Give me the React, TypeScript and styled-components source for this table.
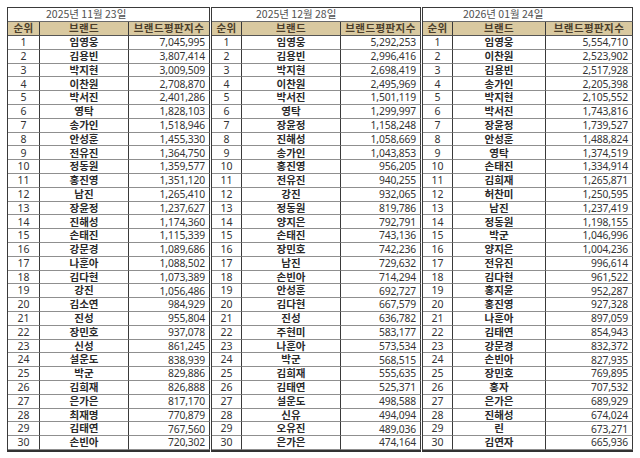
import { Fragment } from 'react';
import styled, { createGlobalStyle } from 'styled-components';

type Entry = [string, string];

type Board = {
  date: string;
  cols: string;
  width: number;
  indent: number;
  rows: Entry[];
};

const boards: Board[] = [
  {
    date: '2025년 11월 23일',
    cols: '32px 89px 1fr',
    width: 203,
    indent: 38,
    rows: [
      ['임영웅', '7,045,995'],
      ['김용빈', '3,807,414'],
      ['박지현', '3,009,509'],
      ['이찬원', '2,708,870'],
      ['박서진', '2,401,286'],
      ['영탁', '1,828,103'],
      ['송가인', '1,518,946'],
      ['안성훈', '1,455,330'],
      ['전유진', '1,364,750'],
      ['정동원', '1,359,577'],
      ['홍진영', '1,351,120'],
      ['남진', '1,265,410'],
      ['장윤정', '1,237,627'],
      ['진해성', '1,174,360'],
      ['손태진', '1,115,339'],
      ['강문경', '1,089,686'],
      ['나훈아', '1,088,502'],
      ['김다현', '1,073,389'],
      ['강진', '1,056,486'],
      ['김소연', '984,929'],
      ['진성', '955,804'],
      ['장민호', '937,078'],
      ['신성', '861,245'],
      ['설운도', '838,939'],
      ['박군', '829,886'],
      ['김희재', '826,888'],
      ['은가은', '817,170'],
      ['최재명', '770,879'],
      ['김태연', '767,560'],
      ['손빈아', '720,302'],
    ],
  },
  {
    date: '2025년 12월 28일',
    cols: '30px 99px 1fr',
    width: 210,
    indent: 44,
    rows: [
      ['임영웅', '5,292,253'],
      ['김용빈', '2,996,416'],
      ['박지현', '2,698,419'],
      ['이찬원', '2,495,969'],
      ['박서진', '1,501,119'],
      ['영탁', '1,299,997'],
      ['장윤정', '1,158,248'],
      ['진해성', '1,058,669'],
      ['송가인', '1,043,853'],
      ['홍진영', '956,205'],
      ['전유진', '940,255'],
      ['강진', '932,065'],
      ['정동원', '819,786'],
      ['양지은', '792,791'],
      ['손태진', '743,136'],
      ['장민호', '742,236'],
      ['남진', '729,632'],
      ['손빈아', '714,294'],
      ['안성훈', '692,727'],
      ['김다현', '667,579'],
      ['진성', '636,782'],
      ['주현미', '583,177'],
      ['나훈아', '573,534'],
      ['박군', '568,515'],
      ['김희재', '555,635'],
      ['김태연', '525,371'],
      ['설운도', '498,588'],
      ['신유', '494,094'],
      ['오유진', '489,036'],
      ['은가은', '474,164'],
    ],
  },
  {
    date: '2026년 01월 24일',
    cols: '30px 93px 1fr',
    width: 211,
    indent: 40,
    rows: [
      ['임영웅', '5,554,710'],
      ['이찬원', '2,523,902'],
      ['김용빈', '2,517,928'],
      ['송가인', '2,205,398'],
      ['박지현', '2,105,552'],
      ['박서진', '1,743,816'],
      ['장윤정', '1,739,527'],
      ['안성훈', '1,488,824'],
      ['영탁', '1,374,519'],
      ['손태진', '1,334,914'],
      ['김희재', '1,265,871'],
      ['허찬미', '1,250,595'],
      ['남진', '1,237,419'],
      ['정동원', '1,198,155'],
      ['박군', '1,046,996'],
      ['양지은', '1,004,236'],
      ['전유진', '996,614'],
      ['김다현', '961,522'],
      ['홍지윤', '952,287'],
      ['홍진영', '927,328'],
      ['나훈아', '897,059'],
      ['김태연', '854,943'],
      ['강문경', '832,372'],
      ['손빈아', '827,935'],
      ['장민호', '769,895'],
      ['홍자', '707,532'],
      ['은가은', '689,929'],
      ['진해성', '674,024'],
      ['린', '673,271'],
      ['김연자', '665,936'],
    ],
  },
];

const GlobalStyle = createGlobalStyle`
  html, body {
    margin: 0;
    background: #ffffff;
  }
  body {
    font-family: "Noto Sans CJK KR", "Noto Sans", sans-serif;
    color: #222;
  }
`;

// ANCHOR Page
const Page = styled.div`
  display: flex;
  align-items: flex-start;
  gap: 1px;
  padding: 7px 0 0 7px;
  width: 640px;
  height: 458px;
  box-sizing: border-box;
  background: #fff;
`;

// ANCHOR Table
const Sheet = styled.div<{ $cols: string; $width: number }>`
  display: grid;
  grid-template-columns: ${(p) => p.$cols};
  grid-template-rows: 14px 14px repeat(30, 13.8px);
  width: ${(p) => p.$width}px;
  box-sizing: border-box;
  border-top: 1px solid #3a3a3a;
  border-left: 1px solid #3a3a3a;
  border-bottom: 2px solid #333;
`;

const Title = styled.div<{ $indent: number }>`
  grid-column: 1 / -1;
  box-sizing: border-box;
  display: flex;
  align-items: center;
  border-right: 1px solid #3a3a3a;
  border-bottom: 1px solid #6a6a6a;
  padding-left: ${(p) => p.$indent}px;
  font-size: 10.5px;
  line-height: 1;
  color: #505050;
  white-space: nowrap;
`;

const Cell = styled.div<{ $align?: 'center' | 'right' }>`
  box-sizing: border-box;
  border-right: 1px solid #3a3a3a;
  border-bottom: 1px solid #8f8f8f;
  display: flex;
  align-items: center;
  justify-content: ${(p) => (p.$align === 'right' ? 'flex-end' : 'center')};
  padding: 0;
  line-height: 1;
  white-space: nowrap;
`;

const HeadCell = styled(Cell)`
  background: #d9c9a0;
  font-size: 10.5px;
  font-weight: 700;
  color: #4a3d2a;
  letter-spacing: 0.4px;
  border-bottom-color: #555;
`;

const Rank = styled(Cell)`
  font-family: "Noto Sans", sans-serif;
  font-size: 10.5px;
  color: #333;
`;

const Name = styled(Cell)`
  font-size: 10.5px;
  font-weight: 700;
  color: #2a2a2a;
`;

const Score = styled(Cell)`
  padding-right: 4px;
  font-family: "Noto Sans", sans-serif;
  font-size: 10.3px;
  color: #333;
  letter-spacing: -0.15px;
`;

const Ranking = ({ board }: { board: Board }) => (
  <Sheet $cols={board.cols} $width={board.width}>
    <Title $indent={board.indent}>{board.date}</Title>
    <HeadCell>순위</HeadCell>
    <HeadCell>브랜드</HeadCell>
    <HeadCell>브랜드평판지수</HeadCell>
    {board.rows.map(([name, score], idx) => (
      <Fragment key={idx}>
        <Rank>{idx + 1}</Rank>
        <Name>{name}</Name>
        <Score $align="right">{score}</Score>
      </Fragment>
    ))}
  </Sheet>
);

export default function App() {
  return (
    <>
      <GlobalStyle />
      <Page>
        {boards.map((board) => (
          <Ranking key={board.date} board={board} />
        ))}
      </Page>
    </>
  );
}
